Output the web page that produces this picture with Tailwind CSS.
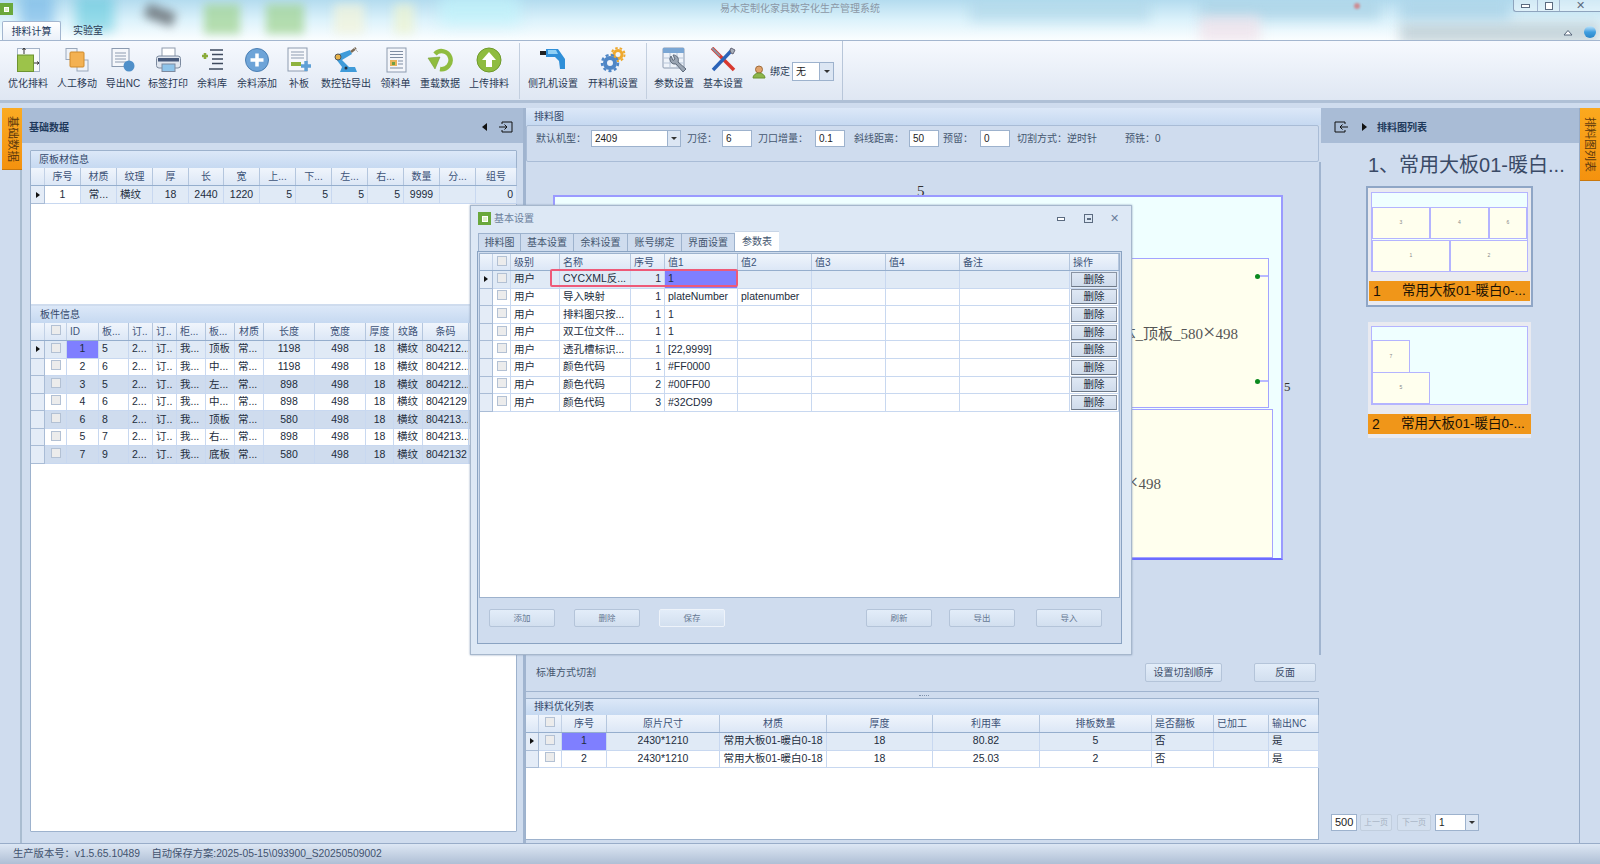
<!DOCTYPE html>
<html lang="zh">
<head>
<meta charset="utf-8"/>
<meta content="width=device-width, initial-scale=1" name="viewport"/>
<title>易木定制化家具数字化生产管理系统</title>
<script src="https://cdn.jsdelivr.net/npm/@tailwindcss/browser@4"></script>
</head>
<body class="relative w-[1600px] h-[864px] overflow-hidden flex flex-col bg-[#cfdcee] text-[10px] text-[#2a3a55] [font-family:'Liberation_Sans','Noto_Sans_CJK_SC',sans-serif]">

  <!-- Title bar with blurred wallpaper -->
  <header class="relative h-[41px] shrink-0 overflow-hidden border-b border-[#a3b6cf] bg-linear-to-b from-[#b4dcef] via-[#dcf2fb] to-[#fbfeff]">
    <div class="absolute left-[20px] top-[-6px] w-[34px] h-[34px] bg-[#6fb4e6]/60 blur-[6px]"></div>
    <div class="absolute left-[76px] top-[-4px] w-[38px] h-[36px] bg-[#4cc4d8]/50 blur-[6px]"></div>
    <div class="absolute left-[145px] top-[8px] w-[30px] h-[14px] bg-[#55585c]/70 blur-[5px] rotate-[20deg]"></div>
    <div class="absolute left-[204px] top-[4px] w-[36px] h-[30px] bg-[#9fd38f]/70 blur-[4px]"></div>
    <div class="absolute left-[266px] top-[4px] w-[38px] h-[30px] bg-[#9fd38f]/70 blur-[4px]"></div>
    <div class="absolute left-[334px] top-[4px] w-[30px] h-[30px] bg-[#f4f3d8]/70 blur-[5px]"></div>
    <div class="absolute left-[394px] top-[4px] w-[20px] h-[30px] bg-[#eef3cf]/70 blur-[5px]"></div>
    <div class="absolute left-[440px] top-[-5px] w-[80px] h-[30px] bg-[#bff3fb]/70 blur-[8px]"></div>
    <div class="absolute left-[970px] top-[0px] w-[180px] h-[22px] bg-[#a9d3e6]/50 blur-[6px]"></div>
    <div class="absolute left-[1200px] top-[0px] w-[180px] h-[20px] bg-[#a5cfe3]/60 blur-[6px]"></div>
    <div class="absolute left-[1200px] top-[16px] w-[60px] h-[26px] bg-[#f1dfe8]/70 blur-[6px]"></div>
    <div class="absolute left-[1400px] top-[22px] w-[200px] h-[22px] bg-[#b7c8cf]/70 blur-[6px]"></div>
    <div class="absolute left-[1400px] top-[0px] w-[110px] h-[20px] bg-[#a6d0e5]/70 blur-[6px]"></div>
    <div class="absolute left-[1354px] top-[3px] w-[6px] h-[6px] rounded-full bg-[#e05a5a]/60 blur-[1px]"></div>

    <div class="absolute left-0 top-[3px] w-[13px] h-[12px] bg-[#6aa83c] flex items-center justify-center"><div class="w-[5px] h-[5px] border border-white bg-[#dff0c8]"></div></div>
    <div class="absolute left-0 right-0 top-[2px] text-center text-[10px] leading-[14px] text-[#8b97a5]">易木定制化家具数字化生产管理系统</div>

    <div class="absolute right-0 top-0 w-[87px] h-[12px] flex border-l border-b border-[#8ea4bd] rounded-bl-[3px] bg-white/40">
      <div class="w-[24px] flex items-center justify-center border-r border-[#a3b6cf]"><div class="w-[9px] h-[4px] border border-[#5b6b80] bg-white"></div></div>
      <div class="w-[22px] flex items-center justify-center border-r border-[#a3b6cf]"><div class="w-[8px] h-[8px] border border-[#5b6b80] bg-white"></div></div>
      <div class="flex-1 flex items-center justify-center text-[11px] leading-none text-[#5b6b80]">✕</div>
    </div>
    <svg class="absolute left-[1563px] top-[29px]" width="10" height="7" viewBox="0 0 10 7"><path d="M1 6 L5 1.5 L9 6 Z" fill="#fff" stroke="#55657a"/></svg>
    <div class="absolute left-[1584px] top-[26px] w-[12px] h-[12px] rounded-full bg-linear-to-b from-[#bfe6fb] via-[#3f9fe0] to-[#2c86c8]"></div>

    <nav class="absolute left-[2px] bottom-0 flex items-end">
      <div class="w-[59px] h-[19px] flex items-center justify-center text-[10px] text-[#1e395b] bg-linear-to-b from-white to-[#eaf0f9] border border-b-0 border-[#a3b6cf] rounded-t-[2px]">排料计算</div>
      <div class="w-[54px] h-[19px] flex items-center justify-center text-[10px] text-[#2a3a55]">实验室</div>
    </nav>
  </header>

  <!-- Ribbon -->
  <section class="h-[62px] shrink-0 flex pl-[3px] bg-linear-to-b from-[#f6f9fe] to-[#dfe7f3] border-b-[3px] border-[#afc0d6]">
    <div class="w-[50px] flex flex-col items-center pt-[6px]">
      <svg width="26" height="26" viewBox="0 0 26 26"><rect x="2.5" y="1.5" width="22" height="23" fill="#f8fafd" stroke="#a5b4c8"/><rect x="2.5" y="8" width="16" height="16.5" fill="#9cc34a" stroke="#6d9430"/><path d="M9 1v6M7.5 3 9 1l1.5 2M19 16h5M22 14.5l2 1.5-2 1.5" stroke="#333" fill="none"/></svg>
      <span class="mt-[4px] leading-[14px] whitespace-nowrap">优化排料</span>
    </div>
    <div class="w-[48px] flex flex-col items-center pt-[6px]">
      <svg width="26" height="26" viewBox="0 0 26 26"><rect x="2" y="1.5" width="11" height="11" fill="#eef2f8" stroke="#9aa8bb"/><rect x="13" y="13" width="11" height="11" fill="#eef2f8" stroke="#9aa8bb"/><rect x="6" y="5" width="14" height="15" rx="1" fill="#f3b152" stroke="#cf8a2b"/></svg>
      <span class="mt-[4px] leading-[14px] whitespace-nowrap">人工移动</span>
    </div>
    <div class="w-[44px] flex flex-col items-center pt-[6px]">
      <svg width="26" height="26" viewBox="0 0 26 26"><rect x="2" y="1.5" width="17" height="18" fill="#f5f7fb" stroke="#8b9ab0"/><path d="M5 6h11M5 9h11M5 12h11M5 15h11" stroke="#8d9bb0"/><circle cx="19" cy="19" r="5.5" fill="#4f8fc9"/></svg>
      <span class="mt-[4px] leading-[14px] whitespace-nowrap">导出NC</span>
    </div>
    <div class="w-[46px] flex flex-col items-center pt-[6px]">
      <svg width="26" height="26" viewBox="0 0 26 26"><rect x="7" y="1" width="13" height="9" fill="#fff" stroke="#8f9cae"/><rect x="1.5" y="9" width="24" height="12" rx="2.5" fill="#dfe5ee" stroke="#7c8a9f"/><rect x="3" y="11" width="21" height="3.5" fill="#47597a"/><rect x="7" y="17" width="13" height="7.5" fill="#8fc4ea" stroke="#7c8a9f"/></svg>
      <span class="mt-[4px] leading-[14px] whitespace-nowrap">标签打印</span>
    </div>
    <div class="w-[42px] flex flex-col items-center pt-[6px]">
      <svg width="26" height="26" viewBox="0 0 26 26"><path d="M6 6v6M3 9h6" stroke="#8aab3a" stroke-width="2.6"/><path d="M11 3h13M13 7.5h11M13 12h11M13 16.500h11M10 22h14" stroke="#3e4a5e" stroke-width="1.500"/></svg>
      <span class="mt-[4px] leading-[14px] whitespace-nowrap">余料库</span>
    </div>
    <div class="w-[48px] flex flex-col items-center pt-[6px]">
      <svg width="26" height="26" viewBox="0 0 26 26"><circle cx="13" cy="13" r="11.500" fill="#6ea4d8" stroke="#4b7fb3"/><path d="M13 6.500v13M6.500 13h13" stroke="#fff" stroke-width="3.500"/></svg>
      <span class="mt-[4px] leading-[14px] whitespace-nowrap">余料添加</span>
    </div>
    <div class="w-[36px] flex flex-col items-center pt-[6px]">
      <svg width="26" height="26" viewBox="0 0 26 26"><rect x="2" y="1" width="19" height="23" fill="#f6f8fc" stroke="#8d9bb0"/><path d="M5 5h13M5 8h13M5 11h13" stroke="#8d9bb0"/><rect x="5" y="15" width="10" height="4" fill="#8fb33f"/><path d="M20 14v10M15 19h10" stroke="#5fa0d6" stroke-width="3.400"/></svg>
      <span class="mt-[4px] leading-[14px] whitespace-nowrap">补板</span>
    </div>
    <div class="w-[58px] flex flex-col items-center pt-[6px]">
      <svg width="26" height="26" viewBox="0 0 26 26"><path d="M3 8 L17 3 L19 7 L9 13 L16 20 L22 20 L24 25 L7 25 L9 20 L3 12 Z" fill="#3f9bd9"/><circle cx="5" cy="10" r="3" fill="#e7b24a" stroke="#555"/><circle cx="13" cy="21" r="1.500" fill="#234"/><path d="M18 5 L23 1" stroke="#7b6a55" stroke-width="2.500"/><path d="M21 1 L25 5" stroke="#b9b9b9"/></svg>
      <span class="mt-[4px] leading-[14px] whitespace-nowrap">数控钻导出</span>
    </div>
    <div class="w-[41px] flex flex-col items-center pt-[6px]">
      <svg width="26" height="26" viewBox="0 0 26 26"><rect x="4" y="1" width="19" height="24" fill="#f4f6fb" stroke="#8d9bb0"/><path d="M7 4.500h13M7 7.500h13M7 10.500h13M15 14h5M15 17h5M7 21h13" stroke="#7f8da2"/><rect x="7" y="13" width="7" height="6" fill="#e9b45c"/><rect x="9" y="15" width="3" height="3" fill="#6f9f44"/></svg>
      <span class="mt-[4px] leading-[14px] whitespace-nowrap">领料单</span>
    </div>
    <div class="w-[48px] flex flex-col items-center pt-[6px]">
      <svg width="26" height="26" viewBox="0 0 26 26"><path d="M8 7 A9 9 0 1 1 13 22" fill="none" stroke="#8fbc3f" stroke-width="4.500"/><path d="M1 11 L13 10 L8 22 Z" fill="#8fbc3f" stroke="#6d9430" stroke-width="0.500"/></svg>
      <span class="mt-[4px] leading-[14px] whitespace-nowrap">重载数据</span>
    </div>
    <div class="w-[50px] flex flex-col items-center pt-[6px]">
      <svg width="26" height="26" viewBox="0 0 26 26"><circle cx="13" cy="13" r="12" fill="#8fbc3f" stroke="#6f9a2c"/><path d="M13 5 L20 13 H16 V20 H10 V13 H6 Z" fill="#fff"/></svg>
      <span class="mt-[4px] leading-[14px] whitespace-nowrap">上传排料</span>
    </div>
    <div class="w-px h-[56px] mt-[2px] ml-[5px] mr-[3px] bg-[#c3cfdf]"></div>
    <div class="w-[60px] flex flex-col items-center pt-[6px]">
      <svg width="28" height="26" viewBox="0 0 28 26"><rect x="1" y="4" width="6" height="4" fill="#222"/><path d="M7 2 H19 L26 12 V22 H21 L20 14 L16 10 H7 Z" fill="#2f8fd8"/><path d="M9 3 H17 L19 7 H9 Z" fill="#8fd0f5"/></svg>
      <span class="mt-[4px] leading-[14px] whitespace-nowrap">侧孔机设置</span>
    </div>
    <div class="w-[60px] flex flex-col items-center pt-[6px]">
      <svg width="28" height="26" viewBox="0 0 28 26"><circle cx="19" cy="7.500" r="4" fill="none" stroke="#eea92f" stroke-width="3"/><circle cx="19" cy="7.500" r="6.500" fill="none" stroke="#eea92f" stroke-width="2" stroke-dasharray="2.500 2"/><circle cx="11" cy="16" r="5" fill="none" stroke="#4f86c6" stroke-width="4"/><circle cx="11" cy="16" r="8" fill="none" stroke="#4f86c6" stroke-width="2.500" stroke-dasharray="3 2.500"/></svg>
      <span class="mt-[4px] leading-[14px] whitespace-nowrap">开料机设置</span>
    </div>
    <div class="w-px h-[56px] mt-[2px] ml-[3px] mr-[3px] bg-[#c3cfdf]"></div>
    <div class="w-[48px] flex flex-col items-center pt-[6px]">
      <svg width="26" height="26" viewBox="0 0 26 26"><rect x="2" y="1" width="21" height="20" rx="1" fill="#eef3fa" stroke="#8d9bb0"/><rect x="2" y="1" width="21" height="5" fill="#7aa6d4"/><path d="M2 11h21M2 16h21M9 6v15M16 6v15" stroke="#b7c5d8"/><path d="M10 9 a5 5 0 0 0 5 8 l7 8 l3 -3 l-8 -7 a5 5 0 0 0 -5 -7 l2 4 l-2 1.500 Z" fill="#9aa5b3" stroke="#5e6a7a"/></svg>
      <span class="mt-[4px] leading-[14px] whitespace-nowrap">参数设置</span>
    </div>
    <div class="w-[50px] flex flex-col items-center pt-[6px]">
      <svg width="26" height="26" viewBox="0 0 26 26"><path d="M2 1 L24 23" stroke="#d8392f" stroke-width="3.500"/><path d="M2 1 L10 9" stroke="#8b96a5" stroke-width="1.800"/><path d="M22 3 L3 23" stroke="#2b63b8" stroke-width="3.500"/><path d="M21 1 l4 2 l-2 4 l-2 -1 l-1 -3 Z" fill="#a8b0bb" stroke="#667"/></svg>
      <span class="mt-[4px] leading-[14px] whitespace-nowrap">基本设置</span>
    </div>
    <div class="flex items-center h-[23px] mt-[19px] ml-[4px]">
      <svg width="14" height="14" viewBox="0 0 14 14"><circle cx="7" cy="4.500" r="3.500" fill="#e0a36d" stroke="#a06b3a"/><path d="M1 13 a6 5 0 0 1 12 0 Z" fill="#8cb54a" stroke="#6d9430"/></svg>
      <span class="ml-[4px] whitespace-nowrap">绑定</span>
      <div class="ml-[2px] w-[42px] h-[19px] flex border border-[#9db2cd] bg-white">
        <span class="flex-1 pl-[3px] leading-[17px] text-[#222]">无</span>
        <div class="w-[14px] flex items-center justify-center border-l border-[#9db2cd] bg-[#dce6f3]"><div class="border-x-[3px] border-t-[3px] border-x-transparent border-t-[#333]"></div></div>
      </div>
    </div>
    <div class="w-px h-full ml-[8px] bg-[#b8c6d9]"></div>
  </section>

  <!-- Main area -->
  <main class="flex-1 flex min-h-0 pt-[5px] border-b border-[#98acc8]">
    <!-- Left dock tab -->
    <div class="w-[22px] shrink-0 pl-[2px] border-r-2 border-[#a9bcd0]">
      <div class="relative w-[20px] h-[62px] flex items-center justify-center bg-linear-to-b from-[#fbab22] to-[#f4920e] border-b border-[#c9780d] text-[11.500px] text-[#5e3a0e] [writing-mode:vertical-rl] [text-orientation:sideways]">基础数据
        <div class="absolute right-0 top-[28px] border-y-[4px] border-r-[4px] border-y-transparent border-r-[#cfdcee]"></div>
      </div>
    </div>

    <!-- Left panel -->
    <aside class="w-[501px] shrink-0 flex flex-col">
      <div class="h-[35px] shrink-0 flex items-center pt-[3px] pl-[7px] pr-[10px] bg-[#a9bcd6]">
        <b class="text-[10px] text-[#1e395b]">基础数据</b>
        <div class="ml-auto border-y-[4px] border-r-[5px] border-y-transparent border-r-[#111]"></div>
        <svg class="ml-[12px]" width="14" height="12" viewBox="0 0 14 12"><path d="M3 3V1h10v10H3V9M0 6h8M5.500 3.500 8 6l-2.500 2.500" fill="none" stroke="#111"/></svg>
      </div>
      <div class="flex-1 flex flex-col ml-[8px] mr-[6px] mt-[7px] mb-[11px] border border-[#9db2cd] bg-white rounded-[1px]">
        <div class="h-[17px] shrink-0 pl-[8px] leading-[17px] bg-linear-to-b from-[#dce8f8] to-[#c6d9f1] text-[#34486a]">原板材信息</div>
        <div id="sheetGrid" class="h-[136px] shrink-0"></div>
        <div class="h-[2px] shrink-0 bg-[#cfdcee]"></div>
        <div class="h-[17px] shrink-0 pl-[9px] leading-[17px] bg-linear-to-b from-[#dce8f8] to-[#c6d9f1] text-[#34486a]">板件信息</div>
        <div id="partGrid" class="flex-1"></div>
      </div>
    </aside>

    <!-- Center panel -->
    <section class="w-[798px] shrink-0 flex flex-col border-l-[3px] border-[#a0b4cf]">
      <div class="h-[17px] shrink-0 pl-[8px] leading-[17px] bg-linear-to-b from-[#dce8f8] to-[#c6d9f1] text-[#34486a]">排料图</div>
      <div class="h-[37px] shrink-0 flex items-start pt-[4px] pl-[9px] mr-[2px] border border-[#a9bcd6] text-[#44566f] rounded-[2px] whitespace-nowrap">
        <span class="leading-[17px]">默认机型：</span>
        <div class="ml-[5px] w-[90px] h-[17px] flex border border-[#9db2cd] bg-white text-[#222]"><span class="flex-1 pl-[3px] leading-[15px]">2409</span><div class="w-[13px] flex items-center justify-center border-l border-[#9db2cd] bg-[#dce6f3]"><div class="border-x-[3px] border-t-[3px] border-x-transparent border-t-[#333]"></div></div></div>
        <span class="ml-[6px] leading-[17px]">刀径：</span>
        <div class="ml-[5px] w-[30px] h-[17px] pl-[3px] leading-[15px] border border-[#9db2cd] bg-white text-[#222]">6</div>
        <span class="ml-[6px] leading-[17px]">刀口增量：</span>
        <div class="ml-[7px] w-[30px] h-[17px] pl-[3px] leading-[15px] border border-[#9db2cd] bg-white text-[#222]">0.1</div>
        <span class="ml-[9px] leading-[17px]">斜线距离：</span>
        <div class="ml-[5px] w-[30px] h-[17px] pl-[3px] leading-[15px] border border-[#9db2cd] bg-white text-[#222]">50</div>
        <span class="ml-[4px] leading-[17px]">预留：</span>
        <div class="ml-[7px] w-[30px] h-[17px] pl-[3px] leading-[15px] border border-[#9db2cd] bg-white text-[#222]">0</div>
        <span class="ml-[7px] leading-[17px]">切割方式：逆时针</span>
        <span class="ml-[28px] leading-[17px]">预铣：0</span>
      </div>

      <!-- Cutting canvas -->
      <div class="relative flex-1 min-h-0 border-r-2 border-[#a0b4cf] overflow-hidden">
        <span class="absolute left-[391px] top-[21px] text-[15px] leading-[16px] text-[#333] [font-family:'Liberation_Serif',serif]">5</span>
        <div class="absolute left-[27px] top-[33px] w-[730px] h-[365px] border-2 border-[#9a9aff] border-b-[#6c6cff] bg-[#efffff]">
          <div class="absolute left-0 top-[61px] w-[714px] h-[150px] border border-[#a3a3ff] bg-[#ffffee]">
            <span class="absolute right-[30px] top-[62px] text-[15px] leading-[18px] whitespace-nowrap text-[#555] [font-family:'Liberation_Serif','Noto_Sans_CJK_SC',serif]">柜体_顶板_580<span class="text-[22px] leading-none font-light">×</span>498</span>
            <div class="absolute right-[0px] top-[16px] w-[10px] h-[2px] bg-[#b9b9ff]"></div>
            <div class="absolute right-[0px] top-[121px] w-[10px] h-[2px] bg-[#b9b9ff]"></div>
            <div class="absolute right-[8px] top-[15px] w-[5px] h-[5px] rounded-full bg-[#0a8a1e]"></div>
            <div class="absolute right-[8px] top-[120px] w-[5px] h-[5px] rounded-full bg-[#0a8a1e]"></div>
          </div>
          <div class="absolute left-0 top-[212px] w-[718px] h-[149px] border border-[#a3a3ff] bg-[#ffffee]">
            <span class="absolute right-[111px] top-[61px] text-[15px] leading-[18px] whitespace-nowrap text-[#555] [font-family:'Liberation_Serif','Noto_Sans_CJK_SC',serif]">柜体_侧板_580<span class="text-[22px] leading-none font-light">×</span>498</span>
          </div>
        </div>
        <span class="absolute left-[758px] top-[217px] text-[13px] leading-[16px] text-[#333] [font-family:'Liberation_Serif',serif]">5</span>
      </div>

      <div class="h-[37px] shrink-0 flex items-center pl-[10px] pr-[3px] mr-[2px] border-b border-[#a0b4cf] text-[#44566f]">
        <span class="mb-[2px]">标准方式切割</span>
        <button class="ml-auto w-[77px] h-[19px] mb-[2px] rounded-[2px] border border-[#b4c4d9] bg-linear-to-b from-[#e3edf9] to-[#d2dfef] text-[10px] text-[#3c4e6a]">设置切割顺序</button>
        <button class="ml-[32px] w-[62px] h-[19px] mb-[2px] rounded-[2px] border border-[#b4c4d9] bg-linear-to-b from-[#e3edf9] to-[#d2dfef] text-[10px] text-[#3c4e6a]">反面</button>
      </div>
      <div class="h-[6px] shrink-0 flex items-center justify-center"><div class="w-[10px] h-px border-t border-dotted border-[#7f93ad]"></div></div>

      <div class="h-[142px] shrink-0 flex flex-col ml-[-1px] mr-[2px] mb-[3px] border border-[#9db2cd] bg-white">
        <div class="h-[16px] shrink-0 pl-[8px] leading-[16px] bg-linear-to-b from-[#dce8f8] to-[#c6d9f1] text-[#34486a]">排料优化列表</div>
        <div id="planGrid" class="flex-1"></div>
      </div>
    </section>

    <!-- Right panel -->
    <aside class="w-[259px] shrink-0 flex flex-col border-r border-[#98acc8]">
      <div class="h-[35px] shrink-0 flex items-center pt-[3px] pl-[13px] bg-[#a9bcd6]">
        <svg width="14" height="12" viewBox="0 0 14 12"><path d="M11 3V1H1v10h10V9M14 6H6M8.500 3.500 6 6l2.500 2.500" fill="none" stroke="#111"/></svg>
        <div class="ml-[14px] border-y-[4px] border-l-[5px] border-y-transparent border-l-[#111]"></div>
        <b class="ml-[10px] text-[10px] text-[#1e395b]">排料图列表</b>
      </div>
      <h2 class="mt-[10px] pl-[47px] text-[20px] leading-[24px] whitespace-nowrap text-[#3a4a66]">1、常用大板01-暖白...</h2>
      <div class="mt-[9px] ml-[45px] w-[167px] h-[121px] flex flex-col border-2 border-[#8fa6c6] bg-[#e9eaf0] pt-[4px]">
        <div class="relative mx-[3px] h-[80px] border border-[#b4b4ff] bg-[#efffff]">
          <div class="absolute left-0 top-[14px] w-[58px] h-[32px] flex items-center justify-center border border-[#b4b4ff] bg-[#ffffee] text-[5px] text-[#888]">3</div>
          <div class="absolute left-[58px] top-[14px] w-[59px] h-[32px] flex items-center justify-center border border-[#b4b4ff] bg-[#ffffee] text-[5px] text-[#888]">4</div>
          <div class="absolute left-[117px] top-[14px] w-[38px] h-[32px] flex items-center justify-center border border-[#b4b4ff] bg-[#ffffee] text-[5px] text-[#888]">6</div>
          <div class="absolute left-0 top-[47px] w-[78px] h-[32px] flex items-center justify-center border border-[#b4b4ff] bg-[#ffffee] text-[5px] text-[#888]">1</div>
          <div class="absolute left-[78px] top-[47px] w-[78px] h-[32px] flex items-center justify-center border border-[#b4b4ff] bg-[#ffffee] text-[5px] text-[#888]">2</div>
        </div>
        <div class="mx-[1px] mt-[9px] h-[20px] flex items-center bg-[#f09619] text-[#1a1205] whitespace-nowrap"><span class="pl-[4px] w-[33px] text-[14px]">1</span><span class="text-[13.500px]">常用大板01-暖白0-...</span></div>
      </div>
      <div class="mt-[15px] ml-[47px] w-[163px] h-[116px] flex flex-col bg-[#e9eaf0] pt-[4px]">
        <div class="relative mx-[3px] h-[79px] border border-[#b4b4ff] bg-[#efffff]">
          <div class="absolute left-0 top-[13px] w-[38px] h-[33px] flex items-center justify-center border border-[#b4b4ff] bg-[#ffffee] text-[5px] text-[#888]">7</div>
          <div class="absolute left-0 top-[45px] w-[58px] h-[32px] flex items-center justify-center border border-[#b4b4ff] bg-[#ffffee] text-[5px] text-[#888]">5</div>
        </div>
        <div class="mt-[9px] h-[20px] flex items-center bg-[#f09619] text-[#1a1205] whitespace-nowrap"><span class="pl-[4px] w-[33px] text-[14px]">2</span><span class="text-[13.500px]">常用大板01-暖白0-...</span></div>
      </div>
      <div class="mt-auto mb-[12px] ml-[10px] flex gap-[3px]">
        <div class="w-[26px] h-[17px] pl-[3px] leading-[15px] text-[11px] border border-[#9db2cd] bg-white text-[#222]">500</div>
        <button class="w-[32px] h-[17px] text-[8px] text-[#a6b2c2] border border-[#c1cede] rounded-[2px] bg-[#d4e0ef]">上一页</button>
        <button class="ml-[2px] w-[34px] h-[17px] text-[8px] text-[#a6b2c2] border border-[#c1cede] rounded-[2px] bg-[#d4e0ef]">下一页</button>
        <div class="ml-[1px] w-[44px] h-[17px] flex border border-[#9db2cd] bg-white text-[#222]"><span class="flex-1 pl-[3px] leading-[15px]">1</span><div class="w-[13px] flex items-center justify-center border-l border-[#9db2cd] bg-[#dce6f3]"><div class="border-x-[3px] border-t-[3px] border-x-transparent border-t-[#333]"></div></div></div>
      </div>
    </aside>

    <!-- Right dock tab -->
    <div class="w-[20px] shrink-0">
      <div class="w-[20px] h-[73px] flex items-center justify-center bg-linear-to-b from-[#fba91e] to-[#f4920e] border-b border-[#c9780d] text-[11px] text-[#5e3a0e] [writing-mode:vertical-rl] [text-orientation:sideways]">排料图列表</div>
    </div>
  </main>

  <!-- Status bar -->
  <footer class="h-[20px] shrink-0 flex items-center pl-[13px] text-[10.300px] text-[#41526e] bg-linear-to-b from-[#dde7f4] to-[#afbfd5] whitespace-pre">生产版本号：v1.5.65.10489    自动保存方案:2025-05-15\093900_S20250509002</footer>

  <!-- Floating settings window -->
  <div class="absolute left-[470px] top-[205px] w-[662px] h-[450px] flex flex-col bg-[#dde8f5] border border-[#a6b7cc] shadow-[0_0_2px_#8fa3bd]">
    <div class="h-[25px] shrink-0 flex items-center pl-[7px]">
      <div class="w-[13px] h-[13px] flex items-center justify-center bg-[#6aa83c]"><div class="w-[6px] h-[6px] border border-white bg-[#dff0c8]"></div></div>
      <span class="ml-[3px] text-[#6b7f9c]">基本设置</span>
      <div class="ml-auto w-[8px] h-[4px] border border-[#5b6b80] bg-white"></div>
      <div class="ml-[19px] w-[9px] h-[9px] border border-[#5b6b80] flex items-center justify-center"><div class="w-[4px] h-[2px] bg-[#5b6b80]"></div></div>
      <span class="ml-[17px] mr-[12px] text-[11px] leading-none text-[#6b7f9c]">✕</span>
    </div>
    <div class="h-[20px] shrink-0 flex items-end pl-[7px] text-[#44566f]">
      <div class="w-[43px] h-[18px] leading-[17px] text-center border border-b-0 border-[#9db2cd] bg-[#cfdcee]">排料图</div>
      <div class="w-[53px] h-[18px] leading-[17px] text-center border border-b-0 border-l-0 border-[#9db2cd] bg-[#cfdcee]">基本设置</div>
      <div class="w-[54px] h-[18px] leading-[17px] text-center border border-b-0 border-l-0 border-[#9db2cd] bg-[#cfdcee]">余料设置</div>
      <div class="w-[54px] h-[18px] leading-[17px] text-center border border-b-0 border-l-0 border-[#9db2cd] bg-[#cfdcee]">账号绑定</div>
      <div class="w-[53px] h-[18px] leading-[17px] text-center border border-b-0 border-l-0 border-[#9db2cd] bg-[#cfdcee]">界面设置</div>
      <div class="w-[44px] h-[20px] leading-[19px] text-center bg-white border-t border-[#c8d5e6]">参数表</div>
    </div>
    <div class="relative w-[645px] h-[393px] ml-[6px] flex flex-col border border-[#8aa3c2] bg-[#cfdcee]">
      <div id="paramGrid" class="h-[345px] mt-[1px] mx-[1px] shrink-0 border border-[#9db2cd] bg-white"></div>
      <div class="absolute left-[72px] top-[17px] w-[188px] h-[18px] border-2 border-[#ee5a78] rounded-[2px]"></div>
      <div class="flex mt-[11px] pl-[11px] pr-[19px] gap-[19px]">
        <button class="w-[66px] h-[18px] text-[8.500px] text-[#667893] border border-[#b4c4d9] rounded-[2px] bg-linear-to-b from-[#e3edf9] to-[#d2dfef]">添加</button>
        <button class="w-[66px] h-[18px] text-[8.500px] text-[#667893] border border-[#b4c4d9] rounded-[2px] bg-linear-to-b from-[#e3edf9] to-[#d2dfef]">删除</button>
        <button class="w-[66px] h-[18px] text-[8.500px] text-[#667893] border border-[#eef3fa] rounded-[2px] bg-linear-to-b from-[#e3edf9] to-[#d2dfef]">保存</button>
        <button class="ml-auto w-[66px] h-[18px] text-[8.500px] text-[#667893] border border-[#b4c4d9] rounded-[2px] bg-linear-to-b from-[#e3edf9] to-[#d2dfef]">刷新</button>
        <button class="ml-[-2px] w-[66px] h-[18px] text-[8.500px] text-[#667893] border border-[#b4c4d9] rounded-[2px] bg-linear-to-b from-[#e3edf9] to-[#d2dfef]">导出</button>
        <button class="ml-[2px] w-[66px] h-[18px] text-[8.500px] text-[#667893] border border-[#b4c4d9] rounded-[2px] bg-linear-to-b from-[#e3edf9] to-[#d2dfef]">导入</button>
      </div>
    </div>
  </div>

<script>
// grid cells share one builder; cols are [width, cell align, header align]
const alignCls = { l: 'justify-start pl-[3px]', c: 'justify-center', r: 'justify-end pr-[3px]' };
const rowBg = { sel: 'bg-[#e0eaf6]', white: 'bg-white', alt: 'bg-[#cfdcee]' };
const hlCls = { blue: 'bg-[#7f7fff]', white: 'bg-white' };

function checkbox() {
  return '<div class="w-[10px] h-[10px] mb-[3px] border border-[#b3c1d4] bg-[#ececec]"></div>';
}

function renderGrid(id, cfg) {
  let html = '<div class="flex border-b border-[#95aecd] bg-linear-to-b from-[#f0f5fc] to-[#dce7f6] text-[#3d5378]" style="height:' + cfg.headH + 'px">';
  if (cfg.rowHead) html += '<div class="shrink-0 border-r border-[#c2d1e6]" style="width:' + cfg.rowHead + 'px"></div>';
  if (cfg.check) html += '<div class="shrink-0 flex items-center justify-center border-r border-[#c2d1e6]" style="width:' + cfg.check + 'px">' + checkbox() + '</div>';
  cfg.cols.forEach((c, i) => {
    html += '<div class="shrink-0 flex items-center overflow-hidden whitespace-nowrap border-r border-[#b4c6de] ' + alignCls[c[2]] + '" style="width:' + c[0] + 'px">' + cfg.head[i] + '</div>';
  });
  html += '</div>';
  cfg.rows.forEach((r, ri) => {
    const bg = rowBg[r.bg];
    html += '<div class="flex text-[#222c3c] ' + bg + '" style="height:' + cfg.rowH + 'px">';
    if (cfg.rowHead) {
      html += '<div class="shrink-0 flex items-center justify-center border-r border-b border-[#a9bcd6] bg-[#e4ecf7]" style="width:' + cfg.rowHead + 'px">'
        + (ri === 0 ? '<div class="border-y-[3px] border-l-[4px] border-y-transparent border-l-[#111]"></div>' : '') + '</div>';
    }
    if (cfg.check) html += '<div class="shrink-0 flex items-center justify-center border-r border-b border-[#c8d8f0]" style="width:' + cfg.check + 'px">' + checkbox() + '</div>';
    cfg.cols.forEach((c, i) => {
      let inner = r.c[i];
      if (inner === 'DEL') inner = '<div class="w-[46px] h-[15px] leading-[13px] text-center border border-[#8a94a3] border-b-[#6e7988] bg-linear-to-b from-[#dfe8f4] to-[#cfdbeb]">删除</div>';
      const hl = r.hl && r.hl[0] === i ? hlCls[r.hl[1]] : '';
      html += '<div class="shrink-0 flex items-center overflow-hidden whitespace-nowrap border-r border-b border-[#c8d8f0] text-[10.500px] ' + alignCls[c[1]] + ' ' + hl + '" style="width:' + c[0] + 'px">' + inner + '</div>';
    });
    html += '</div>';
  });
  document.getElementById(id).innerHTML = html;
}

renderGrid('sheetGrid', {
  headH: 18, rowH: 18, rowHead: 14,
  cols: [[36,'c','c'],[36,'c','c'],[36,'l','c'],[36,'c','c'],[35,'c','c'],[36,'c','c'],[36,'r','c'],[36,'r','c'],[36,'r','c'],[36,'r','c'],[36,'c','c'],[36,'c','c'],[41,'r','c']],
  head: ['序号','材质','纹理','厚','长','宽','上...','下...','左...','右...','数量','分...','组号'],
  rows: [{ bg: 'sel', hl: [0,'white'], c: ['1','常...','横纹','18','2440','1220','5','5','5','5','9999','','0'] }]
});

const partCols = [[32,'c','l'],[30,'l','l'],[24,'l','l'],[24,'l','l'],[29,'l','l'],[29,'l','l'],[29,'l','c'],[51,'c','c'],[51,'c','c'],[28,'c','c'],[29,'l','c'],[46,'l','c'],[42,'l','l']];
renderGrid('partGrid', {
  headH: 18, rowH: 17.57, rowHead: 14, check: 22, cols: partCols,
  head: ['ID','板...','订..','订..','柜...','板...','材质','长度','宽度','厚度','纹路','条码',''],
  rows: [
    { bg: 'sel', hl: [0,'blue'], c: ['1','5','2...','订..','我...','顶板','常...','1198','498','18','横纹','804212...',''] },
    { bg: 'white', c: ['2','6','2...','订..','我...','中...','常...','1198','498','18','横纹','804212...',''] },
    { bg: 'alt', c: ['3','5','2...','订..','我...','左...','常...','898','498','18','横纹','804212...',''] },
    { bg: 'white', c: ['4','6','2...','订..','我...','中...','常...','898','498','18','横纹','8042129',''] },
    { bg: 'alt', c: ['6','8','2...','订..','我...','顶板','常...','580','498','18','横纹','804213...',''] },
    { bg: 'white', c: ['5','7','2...','订..','我...','右...','常...','898','498','18','横纹','804213...',''] },
    { bg: 'alt', c: ['7','9','2...','订..','我...','底板','常...','580','498','18','横纹','8042132',''] }
  ]
});

renderGrid('planGrid', {
  headH: 18, rowH: 17.5, rowHead: 13, check: 23,
  cols: [[45,'c','c'],[113,'c','c'],[107,'c','c'],[106,'c','c'],[107,'c','c'],[112,'c','c'],[62,'l','l'],[55,'l','l'],[50,'l','l']],
  head: ['序号','原片尺寸','材质','厚度','利用率','排板数量','是否翻板','已加工','输出NC'],
  rows: [
    { bg: 'sel', hl: [0,'blue'], c: ['1','2430*1210','常用大板01-暖白0-18','18','80.82','5','否','','是'] },
    { bg: 'white', c: ['2','2430*1210','常用大板01-暖白0-18','18','25.03','2','否','','是'] }
  ]
});

const paramRows = [
  ['CYCXML反...','1','1',''], ['导入映射','1','plateNumber','platenumber'], ['排料图只按...','1','1',''], ['双工位文件...','1','1',''],
  ['透孔槽标识...','1','[22,9999]',''], ['颜色代码','1','#FF0000',''], ['颜色代码','2','#00FF00',''], ['颜色代码','3','#32CD99','']
];
renderGrid('paramGrid', {
  headH: 17, rowH: 17.6, rowHead: 13, check: 18,
  cols: [[49,'l','l'],[71,'l','l'],[34,'r','l'],[73,'l','l'],[74,'l','l'],[74,'l','l'],[74,'l','l'],[110,'l','l'],[49,'c','l']],
  head: ['级别','名称','序号','值1','值2','值3','值4','备注','操作'],
  rows: paramRows.map((p, i) => ({ bg: i === 0 ? 'sel' : 'white', hl: i === 0 ? [3,'blue'] : null, c: ['用户', p[0], p[1], p[2], p[3], '', '', '', 'DEL'] }))
});
</script>
</body>
</html>
